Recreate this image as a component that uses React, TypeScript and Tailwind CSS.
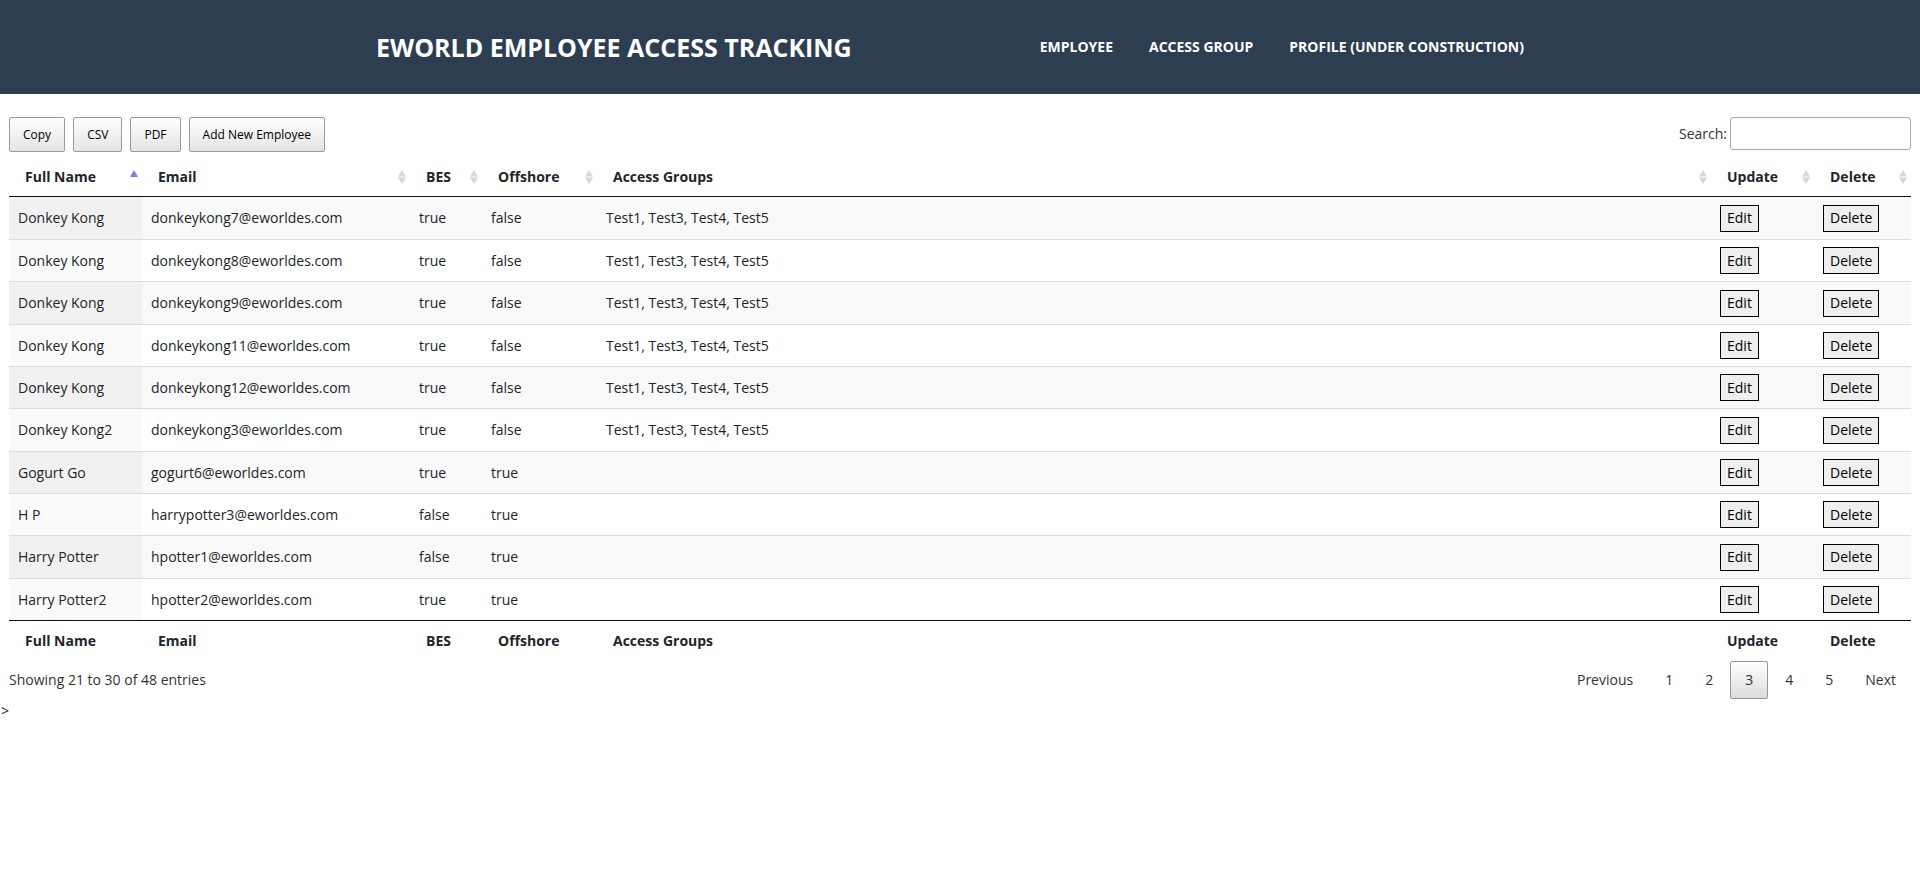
import { useState } from "react";

type Employee = {
  name: string;
  email: string;
  bes: boolean;
  offshore: boolean;
  groups: string;
};

const GROUPS = "Test1, Test3, Test4, Test5";

const employees: Employee[] = [
  { name: "Donkey Kong", email: "donkeykong7@eworldes.com", bes: true, offshore: false, groups: GROUPS },
  { name: "Donkey Kong", email: "donkeykong8@eworldes.com", bes: true, offshore: false, groups: GROUPS },
  { name: "Donkey Kong", email: "donkeykong9@eworldes.com", bes: true, offshore: false, groups: GROUPS },
  { name: "Donkey Kong", email: "donkeykong11@eworldes.com", bes: true, offshore: false, groups: GROUPS },
  { name: "Donkey Kong", email: "donkeykong12@eworldes.com", bes: true, offshore: false, groups: GROUPS },
  { name: "Donkey Kong2", email: "donkeykong3@eworldes.com", bes: true, offshore: false, groups: GROUPS },
  { name: "Gogurt Go", email: "gogurt6@eworldes.com", bes: true, offshore: true, groups: "" },
  { name: "H P", email: "harrypotter3@eworldes.com", bes: false, offshore: true, groups: "" },
  { name: "Harry Potter", email: "hpotter1@eworldes.com", bes: false, offshore: true, groups: "" },
  { name: "Harry Potter2", email: "hpotter2@eworldes.com", bes: true, offshore: true, groups: "" },
];

const columns = [
  { label: "Full Name", width: "w-[133px]" },
  { label: "Email", width: "w-[268px]" },
  { label: "BES", width: "w-[72px]" },
  { label: "Offshore", width: "w-[115px]" },
  { label: "Access Groups", width: "" },
  { label: "Update", width: "w-[103px]" },
  { label: "Delete", width: "w-[97px]" },
];

const exportActions = ["Copy", "CSV", "PDF", "Add New Employee"];
const pages = ["Previous", "1", "2", "3", "4", "5", "Next"];

function SortIcon({ ascending }: { ascending: boolean }) {
  return (
    <svg width="8" height="14" viewBox="0 0 8 14" className="shrink-0" aria-hidden="true">
      {ascending ? (
        <path d="M4 0L8 7H0Z" fill="#7b7fe0" />
      ) : (
        <>
          <path d="M4 0L8 6.5H0Z" fill="#d8d8d8" />
          <path d="M4 14L8 7.5H0Z" fill="#d8d8d8" />
        </>
      )}
    </svg>
  );
}

function SiteHeader() {
  return (
    <header className="flex h-[94px] items-center justify-center bg-[#2c3e50] px-4 font-bold text-white">
      <div className="flex w-full max-w-[1168px] items-center justify-between">
        <a href="#home" className="text-[25px] leading-8">
          EWORLD EMPLOYEE ACCESS TRACKING
        </a>
        <nav className="flex gap-9 pr-5 text-[14px] leading-5">
          <a href="#employee">EMPLOYEE</a>
          <a href="#access-group">ACCESS GROUP</a>
          <a href="#profile">PROFILE (UNDER CONSTRUCTION)</a>
        </nav>
      </div>
    </header>
  );
}

function RowButton({ label }: { label: string }) {
  return (
    <button type="button" className="block h-[27px] border border-black bg-[#efefef] px-1.5 text-[14px] leading-5 text-black">
      {label}
    </button>
  );
}

export default function App() {
  const [query, setQuery] = useState("");

  return (
    <div className="bg-white font-['Open_Sans','Noto_Sans',sans-serif] text-[14px] leading-5 text-[#212529]">
      <SiteHeader />
      <main>
        <div className="px-[9px] pt-[23px]">
          <div className="flex items-start justify-between">
            <div className="flex gap-2">
              {exportActions.map((label) => (
                <button
                  key={label}
                  type="button"
                  className="h-[35px] rounded-[2px] border border-[#999999] bg-linear-to-b from-white to-[#e4e4e4] px-[13px] text-[12px] leading-5 text-black"
                >
                  {label}
                </button>
              ))}
            </div>
            <div className="flex items-center gap-[3px] text-[#333333]">
              <label htmlFor="search">Search:</label>
              <input
                id="search"
                type="search"
                value={query}
                onChange={(e) => setQuery(e.target.value)}
                className="h-[33px] w-[181px] rounded-[3px] border border-[#aaaaaa] px-1.5"
              />
            </div>
          </div>

          <table className="w-full table-fixed border-separate border-spacing-0 text-left">
            <thead>
              <tr className="h-[45px]">
                {columns.map((column, index) => (
                  <th
                    key={column.label}
                    scope="col"
                    aria-sort={index === 0 ? "ascending" : "none"}
                    className={`${column.width} border-b border-[#111111] pt-1.5 pr-1 pl-4 font-bold`}
                  >
                    <div className="flex items-center justify-between">
                      {column.label}
                      <SortIcon ascending={index === 0} />
                    </div>
                  </th>
                ))}
              </tr>
            </thead>
            <tbody>
              {employees.map((employee, index) => {
                const line = index === 0 ? "" : "border-t border-[#dddddd]";
                return (
                  <tr key={employee.email} className="h-[42px] odd:bg-[#f9f9f9] nth-[3n]:h-[43px]">
                    <td className={`${line} px-[9px] ${index % 2 === 0 ? "bg-[#f1f1f1]" : "bg-[#fafafa]"}`}>{employee.name}</td>
                    <td className={`${line} px-[9px]`}>{employee.email}</td>
                    <td className={`${line} px-[9px]`}>{String(employee.bes)}</td>
                    <td className={`${line} px-[9px]`}>{String(employee.offshore)}</td>
                    <td className={`${line} px-[9px]`}>{employee.groups}</td>
                    <td className={`${line} px-[9px]`}>
                      <RowButton label="Edit" />
                    </td>
                    <td className={`${line} px-[9px]`}>
                      <RowButton label="Delete" />
                    </td>
                  </tr>
                );
              })}
            </tbody>
            <tfoot>
              <tr className="h-[41px]">
                {columns.map((column) => (
                  <th key={column.label} scope="col" className="border-t border-[#111111] pl-4 font-bold">
                    {column.label}
                  </th>
                ))}
              </tr>
            </tfoot>
          </table>

          <div className="flex items-center justify-between text-[#333333]">
            <p>Showing 21 to 30 of 48 entries</p>
            <nav aria-label="Pagination" className="flex gap-0.5">
              {pages.map((page) => (
                <button
                  key={page}
                  type="button"
                  aria-current={page === "3" ? "page" : undefined}
                  className={`h-[38px] rounded-[2px] border px-[14px] ${
                    page === "3" ? "border-[#979797] bg-linear-to-b from-white to-[#dcdcdc]" : "border-transparent"
                  }`}
                >
                  {page}
                </button>
              ))}
            </nav>
          </div>
        </div>
        <p className="pt-0.5 pl-px">&gt;</p>
      </main>
    </div>
  );
}
